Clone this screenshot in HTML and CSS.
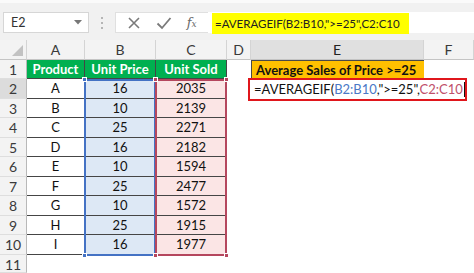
FILE: index.html
```html
<!DOCTYPE html>
<html lang="en">
  <head>
    <title>AVERAGEIF</title>
    <meta charset="UTF-8">
    <link rel="stylesheet" href="styles.css">
  </head>
  <body>
    <div class="bar">
      <div class="namebox"><span>E2</span>
        <svg class="caret" width="8" height="5" viewBox="0 0 8 5"><path d="M0 0H8L4 4.5Z" fill="#777"/></svg>
      </div>
      <div class="dots"><i></i><i></i><i></i></div>
      <div class="btns">
        <svg width="14" height="14" viewBox="0 0 14 14"><path d="M2 2L12 12M12 2L2 12" stroke="#7a7a7a" stroke-width="1.6"/></svg>
        <svg width="16" height="14" viewBox="0 0 16 14"><path d="M1.5 7.5L6 12L14.5 2" stroke="#7a7a7a" stroke-width="1.8" fill="none"/></svg>
        <span class="fx">f<small>x</small></span>
      </div>
      <div class="input"><span class="hl">=AVERAGEIF(B2:B10,"&gt;=25",C2:C10</span></div>
    </div>

    <div class="sheet">
      <div class="ch corner"><b></b></div>
      <div class="ch">A</div>
      <div class="ch">B</div>
      <div class="ch">C</div>
      <div class="ch">D</div>
      <div class="ch on">E</div>
      <div class="ch">F</div>

      <div class="rh">1</div>
      <div class="c t head">Product</div>
      <div class="c t head">Unit Price</div>
      <div class="c t head">Unit Sold</div>
      <div class="c"></div>
      <div class="c title">Average Sales of Price &gt;=25</div>
      <div class="c"></div>

      <div class="rh on">2</div>
      <div class="c t">A</div><div class="c t blue">16</div><div class="c t pink">2035</div>
      <div class="c"></div><div class="c"></div><div class="c"></div>

      <div class="rh">3</div>
      <div class="c t">B</div><div class="c t blue">10</div><div class="c t pink">2139</div>
      <div class="c"></div><div class="c"></div><div class="c"></div>

      <div class="rh">4</div>
      <div class="c t">C</div><div class="c t blue">25</div><div class="c t pink">2271</div>
      <div class="c"></div><div class="c"></div><div class="c"></div>

      <div class="rh">5</div>
      <div class="c t">D</div><div class="c t blue">16</div><div class="c t pink">2182</div>
      <div class="c"></div><div class="c"></div><div class="c"></div>

      <div class="rh">6</div>
      <div class="c t">E</div><div class="c t blue">10</div><div class="c t pink">1594</div>
      <div class="c"></div><div class="c"></div><div class="c"></div>

      <div class="rh">7</div>
      <div class="c t">F</div><div class="c t blue">25</div><div class="c t pink">2477</div>
      <div class="c"></div><div class="c"></div><div class="c"></div>

      <div class="rh">8</div>
      <div class="c t">G</div><div class="c t blue">10</div><div class="c t pink">1572</div>
      <div class="c"></div><div class="c"></div><div class="c"></div>

      <div class="rh">9</div>
      <div class="c t">H</div><div class="c t blue">25</div><div class="c t pink">1915</div>
      <div class="c"></div><div class="c"></div><div class="c"></div>

      <div class="rh">10</div>
      <div class="c t">I</div><div class="c t blue">16</div><div class="c t pink">1977</div>
      <div class="c"></div><div class="c"></div><div class="c"></div>

      <div class="rh">11</div>
      <div class="c"></div><div class="c"></div><div class="c"></div>
      <div class="c"></div><div class="c"></div><div class="c"></div>

      <!-- range highlights while editing -->
      <div class="range rb"><i class="k tl"></i><i class="k bl"></i></div>
      <div class="range rr"><i class="k tl"></i><i class="k tr"></i><i class="k bl"></i><i class="k br"></i></div>

      <div class="edit">=AVERAGEIF(<span class="refb">B2:B10</span>,"&gt;=25",<span class="refr">C2:C10</span><span class="cursor"></span></div>
    </div>
  </body>
</html>
```

FILE: styles.css
```css
* { box-sizing: border-box; }
body
{
    margin: 0;
    width: 474px;
    height: 273px;
    overflow: hidden;
    font-family: Lato, "Open Sans", sans-serif;
    background: #fff;
    color: #111;
}

/* formula bar */
.bar
{
    height: 40px;
    background: #f1f1f1;
    border-top: 3px solid #fafafa;
    padding-top: 9px;
    display: flex;
    align-items: flex-start;
}
.namebox
{
    margin-left: 3px;
    width: 86px;
    height: 21px;
    background: #fff;
    border: 1px solid #d6d6d6;
    display: flex;
    align-items: center;
    justify-content: space-between;
    padding: 0 6px 0 7px;
    font-size: 12.5px;
    color: #333;
}
.dots
{
    width: 26px;
    height: 21px;
    display: flex;
    flex-direction: column;
    align-items: center;
    justify-content: center;
    gap: 3px;
}
.dots i { width: 2px; height: 2px; background: #b5b5b5; }
.btns
{
    width: 93px;
    height: 21px;
    background: #fff;
    border: 1px solid #e0e0e0;
    border-right: 0;
    display: flex;
    align-items: center;
    justify-content: space-around;
    padding: 0 4px;
}
.fx
{
    font-family: "DejaVu Serif", serif;
    font-style: italic;
    font-size: 13px;
    color: #6a6a6a;
}
.fx small { font-size: 9px; }
.input
{
    flex: 1;
    height: 21px;
    background: #fff;
    padding-left: 4px;
}
.hl
{
    display: inline-block;
    height: 21px;
    line-height: 21px;
    background: #ffff00;
    padding: 0 9px 0 3px;
    font-size: 11.5px;
    color: #222;
}

/* sheet */
.sheet
{
    position: relative;
    display: grid;
    grid-template-columns: 27px 58px 71px 71px 24px 173px 50px;
    grid-template-rows: 20px 19px 20px 19px 20px 19px 20px 19px 20px 19px 20px 18px;
    font-size: 13px;
}
.ch
{
    background: #f3f3f3;
    border-right: 1px solid #d4d4d4;
    border-bottom: 1px solid #c4c4c4;
    text-align: center;
    line-height: 20px;
    font-size: 14px;
    color: #3a3a3a;
}
.ch.on { background: #e0e0e0; color: #222; }
.corner { position: relative; }
.corner b
{
    position: absolute;
    right: 3px;
    bottom: 3px;
    width: 0;
    height: 0;
    border-left: 11px solid transparent;
    border-bottom: 11px solid #c2c2c2;
}
.rh
{
    background: #f3f3f3;
    border-right: 1px solid #b8b8b8;
    border-bottom: 1px solid #dedede;
    text-align: center;
    line-height: 19px;
    font-size: 14px;
    color: #3a3a3a;
}
.rh.on { background: #dcdcdc; }
.c { text-align: center; line-height: 19px; white-space: nowrap; }
.t
{
    border-right: 1px solid #454545;
    border-bottom: 1px solid #454545;
}
.head
{
    background: #00b050;
    color: #fff;
    font-weight: bold;
}
.blue { background: #dde8f5; }
.pink { background: #fbe5e5; }
.title
{
    background: #ffc000;
    border: 1px solid #4a4a4a;
    border-right-width: 0;
    font-weight: bold;
    text-align: left;
    padding-left: 4px;
    line-height: 18px;
}

.range
{
    position: absolute;
    top: 39px;
    width: 72px;
    height: 177px;
    border: 2px solid #4472c4;
}
.rb { left: 84px; }
.rr { left: 155px; border-color: #b5475e; }
.k
{
    position: absolute;
    width: 5px;
    height: 5px;
    background: #4472c4;
    border: 1px solid #fff;
}
.rr .k { background: #b5475e; }
.tl { left: -4px; top: -4px; }
.tr { right: -4px; top: -4px; }
.bl { left: -4px; bottom: -4px; }
.br { right: -4px; bottom: -4px; }

.edit
{
    position: absolute;
    left: 248px;
    top: 38px;
    width: 219px;
    height: 23px;
    border: 2px solid #e0161c;
    background: #fff;
    padding-left: 4px;
    line-height: 19px;
    white-space: nowrap;
    color: #111;
}
.refb { color: #4a78c6; }
.refr { color: #c0506a; }
.cursor
{
    display: inline-block;
    width: 1px;
    height: 15px;
    background: #111;
    vertical-align: -3px;
    margin-left: 1px;
}
```
